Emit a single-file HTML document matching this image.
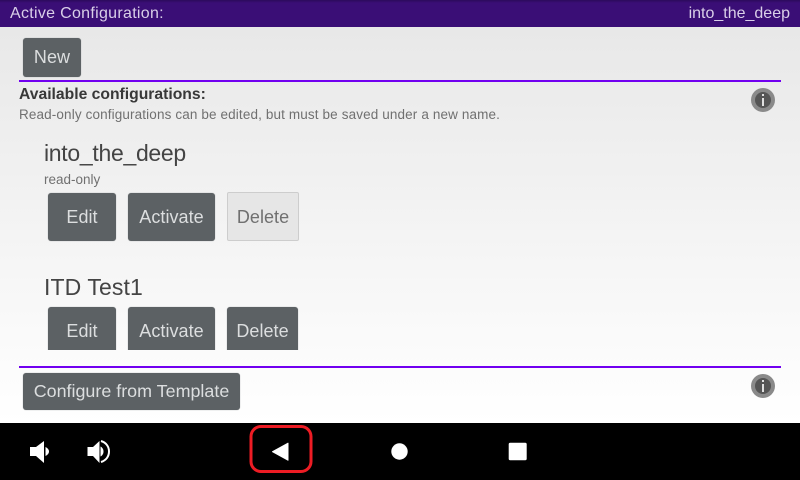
<!DOCTYPE html>
<html><head><meta charset="utf-8"><style>
html,body{margin:0;padding:0;width:800px;height:480px;overflow:hidden}
body{position:relative;font-family:"Liberation Sans",sans-serif;background:#000}
.a{position:absolute;white-space:nowrap}
#bg{left:0;top:27px;width:800px;height:396px;background:linear-gradient(#e8e8e8,#ffffff)}
#hd{left:0;top:0;width:800px;height:27px;background:linear-gradient(#2c0a5c 0,#3a0e76 3px,#3a0e76 100%)}
.t{color:#d9cfe8;font-size:16px;line-height:27px;top:0}
.b{background:#5c6164;border-radius:3px;box-shadow:0 0 1px 0 #a0a3a5;color:#dcdedf;font-size:18px;letter-spacing:.05px;text-align:center;box-sizing:border-box}
.l{left:19px;width:762px;height:2px;background:#7100f0}
.i{width:24px;height:24px;border-radius:50%;background:#8a8a8a;left:751px}
.i:before{content:"";position:absolute;left:4px;top:4px;width:16px;height:16px;border-radius:50%;background:#555}
.i b{position:absolute;left:11px;top:10px;width:2px;height:8px;background:#e0e0e0}
.i i{position:absolute;left:11px;top:6px;width:2px;height:2px;background:#e0e0e0}
</style></head><body>
<div class="a" id="bg"></div>
<div class="a" id="hd"></div>
<div class="a t" style="left:10px;letter-spacing:.3px">Active Configuration:</div>
<div class="a t" style="right:10px">into_the_deep</div>

<div class="a b" style="left:23px;top:38px;width:58px;height:39px;line-height:39px">New</div>
<div class="a l" style="top:80px"></div>
<div class="a" style="left:19px;top:86px;font-size:15.7px;line-height:18px;font-weight:bold;color:#383838">Available configurations:</div>
<div class="a" style="left:19px;top:107px;font-size:13.5px;letter-spacing:.13px;line-height:16px;color:#707070">Read-only configurations can be edited, but must be saved under a new name.</div>
<div class="a i" style="top:88px"><b></b><i></i></div>

<div class="a" style="left:44px;top:139px;font-size:23px;letter-spacing:-.3px;line-height:28px;color:#444">into_the_deep</div>
<div class="a" style="left:44px;top:172px;font-size:13.5px;line-height:16px;color:#707070">read-only</div>
<div class="a b" style="left:48px;top:193px;width:68px;height:48px;line-height:48px">Edit</div>
<div class="a b" style="left:128px;top:193px;width:87px;height:48px;line-height:48px">Activate</div>
<div class="a b" style="left:228px;top:193px;width:70px;height:47px;line-height:48px;background:#e6e6e6;color:#707070;box-shadow:0 0 0 1px #cdcdcd;border-radius:1px">Delete</div>

<div class="a" style="left:44px;top:273px;font-size:23px;letter-spacing:.1px;line-height:28px;color:#444">ITD Test1</div>
<div style="position:absolute;left:0;top:300px;width:800px;height:50px;overflow:hidden">
<div class="a b" style="left:48px;top:7px;width:68px;height:48px;line-height:48px">Edit</div>
<div class="a b" style="left:128px;top:7px;width:87px;height:48px;line-height:48px">Activate</div>
<div class="a b" style="left:227px;top:7px;width:71px;height:48px;line-height:48px">Delete</div>
</div>
<div class="a l" style="top:366px"></div>
<div class="a b" style="left:23px;top:373px;width:217px;height:37px;line-height:37px;letter-spacing:0;font-size:17.9px">Configure from Template</div>
<div class="a i" style="top:374px"><b></b><i></i></div>

<svg class="a" style="left:0;top:423px" width="800" height="57" viewBox="0 423 800 57">
<path d="M30 447h6l8-6v22l-8-7h-6z" fill="#fff"/>
<path d="M45.500 447c2 1 3.500 2.500 3.500 4.500s-1.500 3.500-3.500 4.500z" fill="#fff"/>
<path d="M87.500 447h5.500l6.500-6v22l-6.500-7h-5.500z" fill="#fff"/>
<path d="M100.500 446.500c2 1 3 3 3 5s-1 4-3 5z" fill="#fff"/>
<path d="M101 441c5 1.500 8 5.500 8 10.500s-3 9-8 10.500" fill="none" stroke="#fff" stroke-width="2"/>
<rect x="251" y="426.500" width="60" height="45" rx="10" fill="none" stroke="#ed1c24" stroke-width="3"/>
<path d="M272.500 451.700l15.500-8.500v17z" fill="#fff" stroke="#fff" stroke-width="1" stroke-linejoin="round"/>
<circle cx="399.500" cy="451.500" r="8.200" fill="#fff"/>
<rect x="508.700" y="442.700" width="18" height="17.600" rx="1.500" fill="#fff"/>
</svg>
</body></html>
